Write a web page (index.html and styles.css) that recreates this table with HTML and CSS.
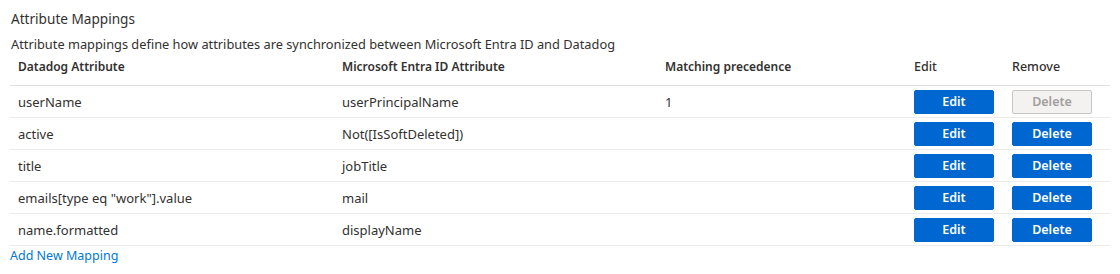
FILE: index.html
```html
<!DOCTYPE html>
<html lang="en">
<head>
    <meta charset="UTF-8">
    <meta name="viewport" content="width=device-width, initial-scale=1.0">
    <title>Attribute Mappings</title>
    <link rel="stylesheet" href="styles.css">
</head>
<body>

<div class="mappings">
    <h2 class="mappings-title">Attribute Mappings</h2>
    <p class="mappings-desc">Attribute mappings define how attributes are synchronized between Microsoft Entra ID and Datadog</p>

    <table class="mapping-table">
        <colgroup>
            <col class="col-source">
            <col class="col-target">
            <col class="col-precedence">
            <col class="col-edit">
            <col class="col-remove">
        </colgroup>
        <thead>
            <tr>
                <th>Datadog Attribute</th>
                <th>Microsoft Entra ID Attribute</th>
                <th>Matching precedence</th>
                <th class="th-plain">Edit</th>
                <th class="th-plain">Remove</th>
            </tr>
        </thead>
        <tbody>
            <tr>
                <td>userName</td>
                <td>userPrincipalName</td>
                <td>1</td>
                <td><button class="btn">Edit</button></td>
                <td><button class="btn" disabled>Delete</button></td>
            </tr>
            <tr>
                <td>active</td>
                <td>Not([IsSoftDeleted])</td>
                <td></td>
                <td><button class="btn">Edit</button></td>
                <td><button class="btn">Delete</button></td>
            </tr>
            <tr>
                <td>title</td>
                <td>jobTitle</td>
                <td></td>
                <td><button class="btn">Edit</button></td>
                <td><button class="btn">Delete</button></td>
            </tr>
            <tr>
                <td>emails[type eq "work"].value</td>
                <td>mail</td>
                <td></td>
                <td><button class="btn">Edit</button></td>
                <td><button class="btn">Delete</button></td>
            </tr>
            <tr>
                <td>name.formatted</td>
                <td>displayName</td>
                <td></td>
                <td><button class="btn">Edit</button></td>
                <td><button class="btn">Delete</button></td>
            </tr>
        </tbody>
    </table>

    <a class="add-link" href="#">Add New Mapping</a>
</div>

</body>
</html>
```

FILE: styles.css
```css
body {
    margin: 0;
    font-family: "Noto Sans", "Open Sans", sans-serif;
    color: #323130;
    background: #fff;
}
.mappings {
    padding: 9px 10px 0 10px;
    width: 1100px;
}
.mappings-title {
    margin: 0;
    font-size: 13.6px;
    font-weight: 400;
    line-height: 20px;
    padding-left: 1px;
}
.mappings-desc {
    margin: 5px 0 0 0;
    padding-left: 1px;
    font-size: 12.8px;
    line-height: 20px;
}
.mapping-table {
    width: 1100px;
    border-collapse: collapse;
    table-layout: fixed;
    font-size: 13px;
}
.col-source { width: 324px; }
.col-target { width: 323px; }
.col-precedence { width: 249px; }
.col-edit { width: 98px; }
.col-remove { width: 106px; }
.mapping-table th {
    text-align: left;
    font-size: 12px;
    font-weight: 600;
    line-height: 18px;
    padding: 4px 8px 9px 8px;
    border-bottom: 1px solid #e1dfdd;
}
.mapping-table th.th-plain {
    font-size: 12.5px;
    font-weight: 500;
}
.mapping-table td {
    height: 31px;
    padding: 0 8px;
    border-bottom: 1px solid #edebe9;
}
.btn {
    display: block;
    width: 80px;
    height: 24px;
    border: 1px solid #0067d0;
    border-radius: 2px;
    background: #0067d0;
    color: #fff;
    font-family: inherit;
    font-size: 12.5px;
    font-weight: 600;
    padding: 0;
    cursor: pointer;
}
.btn:disabled {
    background: #f3f2f1;
    border-color: #c8c6c4;
    color: #a19f9d;
    cursor: default;
}
.add-link {
    display: block;
    width: fit-content;
    margin-top: 3px;
    font-size: 12.5px;
    line-height: 14px;
    color: #0078d4;
    text-decoration: none;
}
```
